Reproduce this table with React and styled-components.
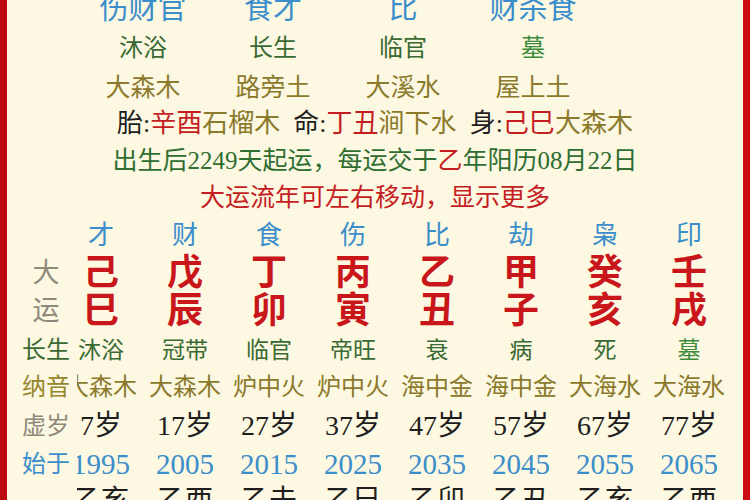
import React from "react";
import styled, { createGlobalStyle } from "styled-components";

const FONT = `"Liberation Serif", "Noto Sans CJK SC", serif`;
const BG = "#fdf8e2";
const C = {
  blue: "#3b8ecb",
  green: "#3a6a33",
  bright: "#3d8c3b",
  olive: "#8b7a2c",
  red: "#c41d22",
  stem: "#c8161b",
  gray: "#8f897b",
  black: "#1e1e1e",
};

const Global = createGlobalStyle`
  html, body { margin: 0; padding: 0; background: ${BG}; }
  body { font-family: ${FONT}; }
`;

const Frame = styled.div`
  width: 750px;
  height: 500px;
  box-sizing: border-box;
  overflow: hidden;
  background: ${BG};
  border-left: 7px solid #bd0a10;
  border-right: 7px solid #cc0c12;
`;

const Inner = styled.div`
  margin-top: -10px;
  display: flex;
  flex-direction: column;
`;

const FourCols = styled.div`
  display: grid;
  grid-template-columns: repeat(4, 130px);
  margin-left: 71px;
  height: ${(p) => p.$h}px;
  align-items: center;
  justify-items: center;
  font-size: ${(p) => p.$size}px;
  color: ${(p) => p.$color};
  line-height: 1;
`;

const Item = styled.span`
  color: ${(p) => p.$color || "inherit"};
  white-space: nowrap;
`;

const Line = styled.div`
  height: ${(p) => p.$h}px;
  display: flex;
  align-items: center;
  justify-content: center;
  font-size: ${(p) => p.$size}px;
  color: ${(p) => p.$color};
  line-height: 1;
`;

const LineText = styled.span`
  white-space: pre;
`;

const Tint = styled.span`
  color: ${(p) => p.$color};
`;

const Table = styled.div`
  display: grid;
  grid-template-columns: 39px repeat(8, 84px);
  grid-template-rows: 40px 34px 42px 36px 37px 41px 36px 38px;
  padding-left: 13px;
`;

const Cell = styled.div`
  display: flex;
  align-items: center;
  justify-content: center;
  white-space: nowrap;
  line-height: 1;
  font-size: ${(p) => p.$size}px;
  font-weight: ${(p) => (p.$bold ? 700 : 400)};
  color: ${(p) => p.$color};
`;

const Label = styled.div`
  grid-column: 1;
  justify-self: start;
  position: relative;
  z-index: 1;
  width: 57px;
  padding-right: 5px;
  box-sizing: border-box;
  background: ${BG};
  display: flex;
  align-items: center;
  justify-content: center;
  white-space: nowrap;
  line-height: 1;
  font-size: ${(p) => p.$size || 24}px;
  color: ${(p) => p.$color};
`;

const shishen = ["才", "财", "食", "伤", "比", "劫", "枭", "印"];
const stems = ["己", "戊", "丁", "丙", "乙", "甲", "癸", "壬"];
const branches = ["巳", "辰", "卯", "寅", "丑", "子", "亥", "戌"];
const phases = ["沐浴", "冠带", "临官", "帝旺", "衰", "病", "死", "墓"];
const nayin = ["大森木", "大森木", "炉中火", "炉中火", "海中金", "海中金", "大海水", "大海水"];
const ages = ["7岁", "17岁", "27岁", "37岁", "47岁", "57岁", "67岁", "77岁"];
const years = ["1995", "2005", "2015", "2025", "2035", "2045", "2055", "2065"];
const liunian = ["乙亥", "乙酉", "乙未", "乙巳", "乙卯", "乙丑", "乙亥", "乙酉"];

function Row({ label, labelColor, labelSize, items, size, color, bold, colorOf }) {
  return (
    <>
      <Label $color={labelColor} $size={labelSize}>{label}</Label>
      {items.map((t, i) => (
        <Cell key={i} $size={size} $bold={bold} $color={colorOf ? colorOf(t) : color}>
          {t}
        </Cell>
      ))}
    </>
  );
}

export default function App() {
  return (
    <>
      <Global />
      <Frame>
        <Inner>
          <FourCols $h={38} $size={29} $color={C.blue}>
            <Item>伤财官</Item>
            <Item>食才</Item>
            <Item>比</Item>
            <Item>财杀食</Item>
          </FourCols>
          <FourCols $h={40} $size={24} $color={C.green}>
            <Item>沐浴</Item>
            <Item>长生</Item>
            <Item>临官</Item>
            <Item $color={C.bright}>墓</Item>
          </FourCols>
          <FourCols $h={38} $size={25} $color={C.olive}>
            <Item>大森木</Item>
            <Item>路旁土</Item>
            <Item>大溪水</Item>
            <Item>屋上土</Item>
          </FourCols>
          <Line $h={36} $size={26} $color={C.black}>
            <LineText>
              胎:<Tint $color={C.red}>辛酉</Tint>
              <Tint $color={C.olive}>石榴木</Tint>{"  "}命:<Tint $color={C.red}>丁丑</Tint>
              <Tint $color={C.olive}>涧下水</Tint>{"  "}身:<Tint $color={C.red}>己巳</Tint>
              <Tint $color={C.olive}>大森木</Tint>
            </LineText>
          </Line>
          <Line $h={36} $size={25} $color="#2f6e30">
            <LineText>
              出生后2249天起运，每运交于<Tint $color={C.red}>乙</Tint>年阳历08月22日
            </LineText>
          </Line>
          <Line $h={38} $size={25} $color={C.red}>
            <LineText>大运流年可左右移动，显示更多</LineText>
          </Line>
          <Table>
            <Row label="" items={shishen} size={26} color={C.blue} />
            <Row label="大" labelSize={27} labelColor={C.gray} items={stems} size={36} bold color={C.stem} />
            <Row label="运" labelSize={27} labelColor={C.gray} items={branches} size={36} bold color={C.stem} />
            <Row
              label="长生"
              labelColor={C.green}
              items={phases}
              size={23}
              colorOf={(t) => (t === "墓" ? C.bright : C.green)}
            />
            <Row label="纳音" labelColor="#97872f" items={nayin} size={24} color={C.olive} />
            <Row label="虚岁" labelColor={C.gray} items={ages} size={28} color={C.black} />
            <Row label="始于" labelColor={C.blue} items={years} size={29} color={C.blue} />
            <Row label="" items={liunian} size={28} color={C.black} />
          </Table>
        </Inner>
      </Frame>
    </>
  );
}
